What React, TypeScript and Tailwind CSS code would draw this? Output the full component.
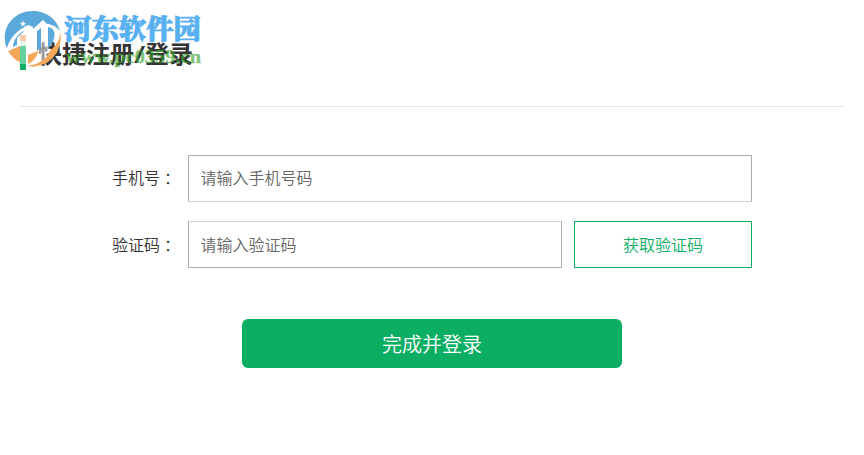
import React from 'react';

const Field = ({ placeholder, className }: { placeholder: string; className: string }) => (
  <input
    type="text"
    placeholder={placeholder}
    className={`h-[47px] border bg-white pl-[11.5px] text-[16px] font-[350] text-[#333] outline-none placeholder:text-[#666] ${className}`}
  />
);

const Colon = () => (
  <span className="relative top-px [font-family:'Noto_Sans_CJK_TC',sans-serif] leading-none" lang="zh-TW">：</span>
);

const Watermark = () => (
  <div className="pointer-events-none absolute left-0 top-0 h-[80px] w-[210px]">
    <svg className="absolute left-0 top-0" width="70" height="80" viewBox="0 0 70 80">
      <path d="M38 40H49V54C45 59 42 63 38 67Z" fill="#fff" fillOpacity=".5" />
      <path d="M5 41C3 24 16 11 33 11C46 11 57 19 60 31C56 26 51 24 47 24L43 20L33 29V27L28 25C18 30 10 37 7 48C6 46 5 44 5 41Z" fill="#5aa9da" />
      <path d="M13 47C13 40 18 34 25 30L17 38V45Z" fill="#5aa9da" />
      <path d="M37 31L41 28V48L37 51Z" fill="#5aa9da" />
      <path d="M48 27C53 28 56 32 54 38C53 43 51 46 48 48Z" fill="#5aa9da" />
      <path d="M60 31C64 47 53 64 37 66C34 67 31 67 28 66C39 64 47 59 50 51C56 45 61 39 60 31Z" fill="#f5a75a" />
      <path d="M8 51L20 46V62C15 60 11 56 8 51Z" fill="#f5a75a" />
      <path d="M28 55L38 51C37 57 33 62 28 64Z" fill="#f5a75a" />
      <path d="M23 20.5L23.8 22.8L26.2 22.9L24.3 24.3L25 26.5L23 25.2L21 26.5L21.7 24.3L19.8 22.9L22.2 22.8Z" fill="#fff" />
      <path d="M20 35H26V41H20Z" fill="#fac9a9" />
      <path d="M20 41H26V46H20Z" fill="#e5f5ec" />
      <path d="M20 46H26V64H20Z" fill="#68cf9f" />
    </svg>
    <svg className="absolute left-0 top-0" width="210" height="80" viewBox="0 0 210 80">
      <text x="64" y="39" textLength="137" lengthAdjust="spacingAndGlyphs" fill="#57b0f2" stroke="#57b0f2" strokeWidth=".8" className="text-[27px] font-black [font-family:'Noto_Serif_CJK_SC','Noto_Sans_CJK_SC',serif]">河东软件园</text>
      <text x="66" y="63" textLength="135" lengthAdjust="spacingAndGlyphs" fill="#39a52c" fillOpacity=".65" stroke="#39a52c" strokeOpacity=".4" strokeWidth=".4" className="text-[18px] font-bold [font-family:'Liberation_Serif',serif]">www.pc0359.cn</text>
    </svg>
  </div>
);

export default function App() {
  return (
    <main className="relative h-[455px] w-[864px] overflow-hidden bg-white px-5 text-[#333] [font-family:'Open_Sans','Noto_Sans_CJK_SC',sans-serif]">
      <header className="flex h-[107px] items-start border-b border-[#e8e8e8] pt-[36px]">
        <span className="h-[34px] w-[6px] bg-[#0bae62]" />
        <h1 className="ml-[12px] whitespace-nowrap text-[24px] font-bold leading-[35px]">快捷注册<span className="inline-block w-[11px] origin-left scale-x-120 font-semibold">/</span>登录</h1>
      </header>
      <form className="flex flex-col pt-[48px] text-[16px] font-[350]">
        <div className="flex items-center">
          <label className="w-[168px] whitespace-nowrap pb-[2px] pl-[92px] leading-6">手机号<Colon /></label>
          <Field placeholder="请输入手机号码" className="w-[564px] border-[#acaeb0] border-b-[#cfd0d2] pb-[2px]" />
        </div>
        <div className="mt-[19px] flex items-center">
          <label className="w-[168px] whitespace-nowrap pl-[92px] leading-6">验证码<Colon /></label>
          <Field placeholder="请输入验证码" className="w-[374px] border-[#acaeb0] border-t-[#cfd0d2]" />
          <button type="button" className="ml-3 h-[47px] w-[178px] border border-[#0bae62] text-[16px] text-[#0bae62]">获取验证码</button>
        </div>
        <button type="button" className="ml-[222px] mt-[51px] h-[49px] w-[380px] rounded-[6px] bg-[#0bae62] pt-[2px] text-[20px] text-white">完成并登录</button>
      </form>
      <Watermark />
    </main>
  );
}
